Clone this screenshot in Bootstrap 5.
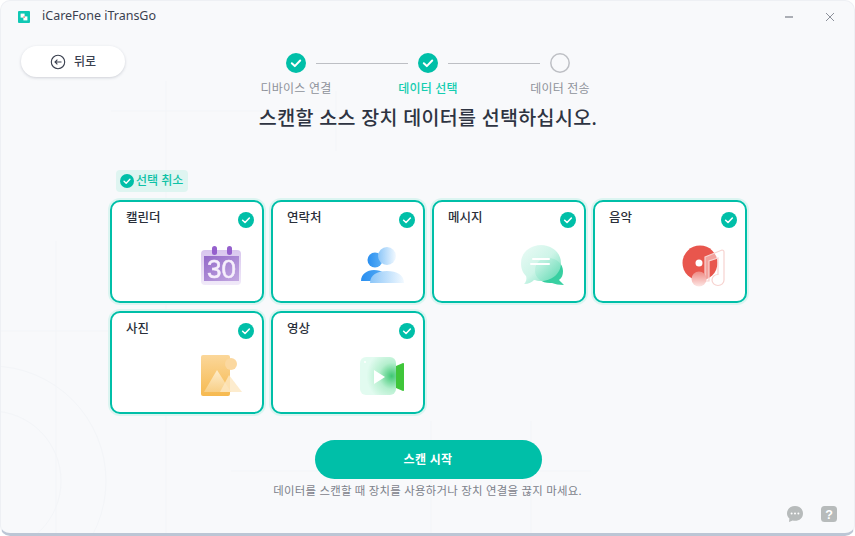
<!DOCTYPE html>
<html lang="ko">
<head>
<meta charset="utf-8">
<title>iCareFone iTransGo</title>
<link href="https://cdn.jsdelivr.net/npm/bootstrap@5.3.0/dist/css/bootstrap.min.css" rel="stylesheet">
<style>
html,body{height:100%;margin:0;background:#fff;overflow:hidden}
body{font-family:"Noto Sans","Noto Sans CJK KR",sans-serif;color:#2e3442}
.app-window{position:relative;width:855px;height:536px;background:#f8f9fb;border-radius:10px;border:1px solid #eef0f4;border-bottom:3px solid #bcc6d5;overflow:hidden}
.bg-lines{position:absolute;left:0;top:0;z-index:0}
.app-content{position:relative;z-index:1;display:flex;flex-direction:column;height:100%}
.title-bar{height:31px;padding:0 18px 0 17px;font-size:12.5px;color:#3b4150;margin-bottom:14px}
.win-ctl{width:12px;height:12px;display:block}
.win-gap{margin-right:29px}
.head-row{display:grid;grid-template-columns:20px 104px 1fr;height:56px}
.back-btn{grid-column:2;width:104px;height:31px;border-radius:16px;background:#fff;border:0;box-shadow:0 1px 3px rgba(60,70,90,.22);font-size:12px;font-weight:500;color:#3b4150;display:flex;align-items:center;justify-content:center;gap:8px;padding:0;line-height:1}
.stepper{position:absolute;left:229px;top:52px;width:396px;display:grid;grid-template-columns:repeat(3,132px)}
.step-item{display:flex;flex-direction:column;align-items:center;position:relative;font-size:12px;color:#8e929a;letter-spacing:.2px}
.step-item span{margin-top:7px;line-height:18px}
.step-item.now{color:#14cdb0;font-weight:500}
.step-dot{width:20px;height:20px;display:block}
.step-line{position:absolute;left:86px;top:10px;width:92px;height:1px;background:#bdbfc4}
.page-title{font-size:19.5px;font-weight:500;text-align:center;line-height:28px;margin:2px 0 0 1px;color:#2e3442;letter-spacing:.35px}
.clear-pill{align-self:flex-start;margin:38px 0 0 115px;height:22px;width:72px;background:#dff5f1;border-radius:4px;display:flex;align-items:center;gap:2px;padding-left:4px;font-size:12px;color:#0fc2a6;font-weight:500;white-space:nowrap}
.type-grid{display:grid;grid-template-columns:repeat(4,154px);grid-auto-rows:103px;gap:8px 7px;margin:8px 0 0 109px}
.type-tile{background:#fff;border:2px solid #00bfa8;border-radius:10px;box-shadow:0 0 0 2px #dcf5f1;display:flex;flex-direction:column}
.tile-head{display:flex;justify-content:space-between;padding:7px 8px 0 14px;font-size:12.5px;font-weight:500;color:#2a2f3a;line-height:18px}
.tile-check{width:16px;height:16px;margin-top:3px;display:block}
.tile-art{width:48px;height:48px;display:block;align-self:flex-end;margin:auto 16px 9px 0;filter:blur(.45px)}
.scan-btn{align-self:center;width:227px;height:39px;margin:26px 0 0 1px;border:0;border-radius:20px;background:#00bfa8;color:#fff;font-size:12px;font-weight:700;padding:0;letter-spacing:.3px}
.scan-note{text-align:center;font-size:11.4px;color:#7d828b;line-height:16px;margin-top:4px;letter-spacing:.27px}
.foot-icons{position:absolute;right:16px;bottom:10px;display:flex;gap:16px}
.foot-icons svg{display:block;width:18px;height:18px}
</style>
</head>
<body>
<svg width="0" height="0" class="position-absolute">
<defs>
<symbol id="chk" viewBox="0 0 20 20"><circle cx="10" cy="10" r="10" fill="#00bfa8"/><path d="M5.8 10.3l3 2.8 5.4-5.600" fill="none" stroke="#fff" stroke-width="2" stroke-linecap="round" stroke-linejoin="round"/></symbol>
<linearGradient id="calG" x1="0" y1="0" x2="0" y2="1"><stop offset="0" stop-color="#d8c6ee"/><stop offset="1" stop-color="#f1eaf9"/></linearGradient>
<linearGradient id="calI" x1="0" y1="0" x2="1" y2="1"><stop offset="0" stop-color="#9269c8"/><stop offset="1" stop-color="#c4a9e2"/></linearGradient>
<linearGradient id="ppA" x1="0" y1="0" x2="1" y2="0"><stop offset="0" stop-color="#2a8ff0"/><stop offset="1" stop-color="#5cb0f5"/></linearGradient>
<linearGradient id="ppB" x1="0" y1="0" x2="1" y2="0"><stop offset="0" stop-color="#8cc6f8"/><stop offset="1" stop-color="#f2f9ff"/></linearGradient>
<linearGradient id="msgA" x1="0" y1="0" x2="1" y2="1"><stop offset="0" stop-color="#eafbf6"/><stop offset=".5" stop-color="#c9f4e6"/><stop offset="1" stop-color="#58d8ae"/></linearGradient>
<linearGradient id="msgB" x1="0" y1="0" x2="1" y2="1"><stop offset="0" stop-color="#2cc898"/><stop offset="1" stop-color="#3bd2a4"/></linearGradient>
<linearGradient id="blob" x1="0" y1="0" x2="0" y2="1"><stop offset="0" stop-color="#ee8a84"/><stop offset="1" stop-color="#fde6e4"/></linearGradient>
<linearGradient id="pho" x1="0" y1="0" x2="0" y2="1"><stop offset="0" stop-color="#fbd79a"/><stop offset="1" stop-color="#f6b94f"/></linearGradient>
<linearGradient id="tri" x1="0" y1="0" x2="0" y2="1"><stop offset="0" stop-color="#fff2d8"/><stop offset="1" stop-color="#f8d28e"/></linearGradient>
<radialGradient id="vid" cx=".88" cy=".5" r=".7"><stop offset="0" stop-color="#3fc874"/><stop offset=".5" stop-color="#b5efce"/><stop offset="1" stop-color="#e2fbf0"/></radialGradient>
</defs>
</svg>
<div class="app-window">
  <svg class="bg-lines" width="855" height="536" fill="none" stroke="#f3f5f8" stroke-width="1">
    <circle cx="-10" cy="480" r="115"/><circle cx="-10" cy="480" r="70"/>
    <path d="M55 240V534M165 80V534M335 90V150M0 330H110M430 420V534M530 420V534M230 470H590M110 110H330"/>
  </svg>
  <div class="app-content">
    <div class="title-bar d-flex align-items-center">
      <svg width="12" height="12" viewBox="0 0 12 12" class="me-3 flex-shrink-0"><rect width="12" height="12" rx="1" fill="#10c8b4"/><rect x="2.600" y="2.600" width="4" height="4" fill="#fff"/><rect x="5.400" y="5.400" width="4" height="4" fill="#fff"/><rect x="5.400" y="5.400" width="1.400" height="1.400" fill="#f2645a"/></svg>
      <span class="ps-0 flex-grow-1" style="margin-left:-4px">iCareFone iTransGo</span>
      <svg class="win-ctl win-gap" viewBox="0 0 12 12"><path d="M2 6h8" stroke="#5f6470" stroke-width="1.200"/></svg>
      <svg class="win-ctl" viewBox="0 0 12 12"><path d="M2 2l8 8M10 2l-8 8" stroke="#8d919b" stroke-width="1"/></svg>
    </div>
    <div class="head-row">
      <button class="back-btn" type="button">
        <svg width="16" height="16" viewBox="0 0 16 16"><circle cx="8" cy="8" r="6.700" fill="none" stroke="#3b4150" stroke-width="1.100"/><path d="M11.500 8H5M7.400 5.600L5 8l2.400 2.400" fill="none" stroke="#3b4150" stroke-width="1.100"/></svg>
        <span>뒤로</span>
      </button>
    </div>
    <div class="stepper">
      <div class="step-item"><svg class="step-dot"><use href="#chk"/></svg><span>디바이스 연결</span><i class="step-line"></i></div>
      <div class="step-item now"><svg class="step-dot"><use href="#chk"/></svg><span>데이터 선택</span><i class="step-line"></i></div>
      <div class="step-item"><svg class="step-dot" viewBox="0 0 20 20"><circle cx="10" cy="10" r="9.200" fill="none" stroke="#bdbfc4" stroke-width="1.500"/></svg><span>데이터 전송</span></div>
    </div>
    <h1 class="page-title">스캔할 소스 장치 데이터를 선택하십시오.</h1>
    <div class="clear-pill"><svg width="14" height="14"><use href="#chk"/></svg>선택 취소</div>
    <div class="type-grid">
      <div class="type-tile">
        <div class="tile-head"><span>캘린더</span><svg class="tile-check"><use href="#chk"/></svg></div>
        <svg class="tile-art" viewBox="0 0 48 48"><rect x="3" y="6" width="40" height="35" rx="4" fill="url(#calG)"/><rect x="14" y="2" width="5" height="9" rx="2.500" fill="#9560cd"/><rect x="29" y="2" width="5" height="9" rx="2.500" fill="#9560cd"/><rect x="6" y="12" width="35" height="25" fill="url(#calI)"/><text x="23.500" y="34" text-anchor="middle" font-family="Liberation Sans,sans-serif" font-size="26" font-weight="400" stroke="#f6effc" stroke-width=".5" fill="#f6effc">30</text></svg>
      </div>
      <div class="type-tile">
        <div class="tile-head"><span>연락처</span><svg class="tile-check"><use href="#chk"/></svg></div>
        <svg class="tile-art" viewBox="0 0 48 48"><circle cx="16" cy="16" r="7.500" fill="url(#ppA)"/><path d="M2 37c0-7 6-11 13-11 8 0 14 4 15 11z" fill="url(#ppA)"/><circle cx="28" cy="12" r="9" fill="url(#ppB)"/><path d="M11 39c0-8 7-12 17-12s17 4 17 12z" fill="url(#ppB)"/></svg>
      </div>
      <div class="type-tile">
        <div class="tile-head"><span>메시지</span><svg class="tile-check"><use href="#chk"/></svg></div>
        <svg class="tile-art" viewBox="0 0 48 48"><path d="M28 14c9 0 15 6 15 13 0 4-1 7-4 9l5 5c-5 0-9-1-12-2-9 1-17-5-17-12s4-13 13-13z" fill="url(#msgB)"/><path d="M21 1c10 0 20 7 20 18s-10 18-20 18c-3 0-5-.5-7-1-2 2-5 4-10 4 2-2 3-5 2-8C3 29 1 25 1 19 1 8 11 1 21 1z" fill="url(#msgA)" opacity=".9"/><path d="M13 15h16M11 20h18" stroke="#fff" stroke-width="2" stroke-linecap="round"/></svg>
      </div>
      <div class="type-tile">
        <div class="tile-head"><span>음악</span><svg class="tile-check"><use href="#chk"/></svg></div>
        <svg class="tile-art" viewBox="0 0 48 48"><circle cx="19" cy="19" r="17.500" fill="#e8564d"/><circle cx="18" cy="19" r="3.500" fill="#fff"/><path d="M24 13L41 6c1.500 0 2 1 2 2v28c0 3-2.500 5.500-6 5.500s-6-2.500-6-5.500 2.500-5.500 6-5.500V14L28 17v20H24z" fill="#fff" fill-opacity=".45" stroke="#f7d3d0" stroke-width="1.200"/><circle cx="18" cy="35" r="7.500" fill="url(#blob)"/></svg>
      </div>
      <div class="type-tile">
        <div class="tile-head"><span>사진</span><svg class="tile-check"><use href="#chk"/></svg></div>
        <svg class="tile-art" viewBox="0 0 48 48"><rect x="3" y="0" width="29" height="41" rx="2" fill="url(#pho)"/><circle cx="33" cy="9" r="6" fill="#fbd8a0"/><path d="M19 15L33 37H6z" fill="url(#tri)" opacity=".85"/><path d="M31 20L44 37H22z" fill="#fde7c2" opacity=".8"/></svg>
      </div>
      <div class="type-tile">
        <div class="tile-head"><span>영상</span><svg class="tile-check"><use href="#chk"/></svg></div>
        <svg class="tile-art" viewBox="0 0 48 48"><path d="M37 11l7-3c.6 0 1 .5 1 1v26c0 .8-.4 1-1 1l-7-3z" fill="#3fc63a"/><rect x="1" y="2" width="36" height="38" rx="6" fill="url(#vid)"/><path d="M15 15l11 7-11 7z" fill="#fff"/><circle cx="6" cy="7" r="1" fill="#fff"/></svg>
      </div>
    </div>
    <button class="scan-btn" type="button">스캔 시작</button>
    <div class="scan-note">데이터를 스캔할 때 장치를 사용하거나 장치 연결을 끊지 마세요.</div>
    <div class="foot-icons">
      <svg viewBox="0 0 18 18"><path d="M9 1c4.600 0 8 3.200 8 7.400s-3.400 7.400-8 7.400c-.8 0-1.600-.1-2.300-.3L3 17l.4-3.400C1.900 12.200 1 10.400 1 8.400 1 4.200 4.400 1 9 1z" fill="#b7bbbb"/><circle cx="5.600" cy="8.400" r="1" fill="#fff"/><circle cx="9" cy="8.400" r="1" fill="#fff"/><circle cx="12.400" cy="8.400" r="1" fill="#fff"/></svg>
      <svg viewBox="0 0 18 18"><rect x="1" y="1" width="16" height="16" rx="3.500" fill="#b7bbbb"/><text x="9" y="13.500" text-anchor="middle" font-family="Liberation Sans,sans-serif" font-size="12.500" font-weight="700" fill="#fff">?</text></svg>
    </div>
  </div>
</div>
</body>
</html>
